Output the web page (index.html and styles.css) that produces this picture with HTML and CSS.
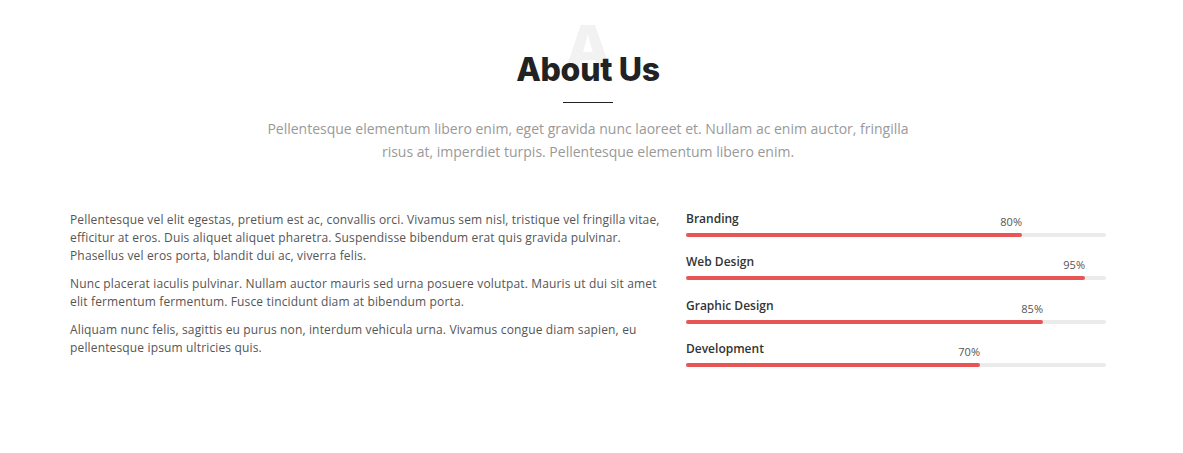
FILE: index.html
```html
<!DOCTYPE html>
<html lang="en">
<head>
<meta charset="utf-8">
<title>About Us</title>
<link rel="stylesheet" href="styles.css">
</head>
<body>
<section class="about">
  <header class="section-head">
    <div class="title-wrap">
      <h2 class="title">About Us</h2>
    </div>
    <div class="title-line"></div>
    <p class="subtitle">Pellentesque elementum libero enim, eget gravida nunc laoreet et. Nullam ac enim auctor, fringilla risus at, imperdiet turpis. Pellentesque elementum libero enim.</p>
  </header>
  <div class="content">
    <div class="text-col">
      <p>Pellentesque vel elit egestas, pretium est ac, convallis orci. Vivamus sem nisl, tristique vel fringilla vitae, efficitur at eros. Duis aliquet aliquet pharetra. Suspendisse bibendum erat quis gravida pulvinar. Phasellus vel eros porta, blandit dui ac, viverra felis.</p>
      <p>Nunc placerat iaculis pulvinar. Nullam auctor mauris sed urna posuere volutpat. Mauris ut dui sit amet elit fermentum fermentum. Fusce tincidunt diam at bibendum porta.</p>
      <p>Aliquam nunc felis, sagittis eu purus non, interdum vehicula urna. Vivamus congue diam sapien, eu pellentesque ipsum ultricies quis.</p>
    </div>
    <div class="skills">
      <div class="skill">
        <div class="skill-name">Branding</div>
        <div class="bar"><div class="fill" style="width:80%"><span class="pct">80%</span></div></div>
      </div>
      <div class="skill">
        <div class="skill-name">Web Design</div>
        <div class="bar"><div class="fill" style="width:95%"><span class="pct">95%</span></div></div>
      </div>
      <div class="skill">
        <div class="skill-name">Graphic Design</div>
        <div class="bar"><div class="fill" style="width:85%"><span class="pct">85%</span></div></div>
      </div>
      <div class="skill">
        <div class="skill-name">Development</div>
        <div class="bar"><div class="fill" style="width:70%"><span class="pct">70%</span></div></div>
      </div>
    </div>
  </div>
</section>
</body>
</html>
```
FILE: styles.css
```css
* { box-sizing: border-box; }
html, body { margin: 0; padding: 0; background: #fff; }
body { font-family: "Open Sans", "Liberation Sans", sans-serif; }

.about {
  width: 1036px;
  margin-left: 70px;
  padding-top: 27px;
}

.section-head {
  display: flex;
  flex-direction: column;
  align-items: center;
}

.title-wrap {
  position: relative;
  height: 72px;
  display: flex;
  justify-content: center;
}

.title-wrap::before {
  content: "A";
  position: absolute;
  top: -10px;
  left: 50%;
  transform: translateX(-50%);
  font-family: "Inter", "Open Sans", sans-serif;
  font-weight: 800;
  font-size: 62px;
  color: #f2f2f2;
  line-height: 1;
  z-index: 0;
}

.title {
  position: relative;
  z-index: 1;
  margin: 0;
  margin-top: 24px;
  font-family: "Inter", "Open Sans", sans-serif;
  font-weight: 800;
  font-size: 32px;
  letter-spacing: -0.3px;
  line-height: 38px;
  color: #222;
}

.title-line {
  width: 50px;
  height: 1px;
  background: #222;
  margin-top: 3px;
}

.subtitle {
  margin: 14px 0 0;
  max-width: 660px;
  text-align: center;
  font-size: 14px;
  line-height: 23px;
  color: #999;
}

.content {
  display: grid;
  grid-template-columns: 600px 420px;
  column-gap: 16px;
  margin-top: 47px;
}

.text-col {
  font-family: "Open Sans", sans-serif;
  font-size: 12px;
  letter-spacing: 0.15px;
  line-height: 18px;
  color: #555;
  padding-top: 1px;
}

.text-col p { margin: 0 0 10px; }

.skills {
  display: flex;
  flex-direction: column;
  gap: 17.4px;
  padding-top: 1px;
}

.skill-name {
  font-family: "Open Sans", sans-serif;
  font-weight: 600;
  font-size: 12px;
  line-height: 16px;
  color: #333;
  margin-bottom: 6px;
}

.bar {
  height: 4px;
  background: #ebebeb;
  border-radius: 2px;
}

.fill {
  position: relative;
  height: 4px;
  background: #e85555;
  border-radius: 2px;
}

.pct {
  position: absolute;
  right: 0;
  bottom: 8px;
  font-size: 11px;
  line-height: 14px;
  color: #555;
}
```
